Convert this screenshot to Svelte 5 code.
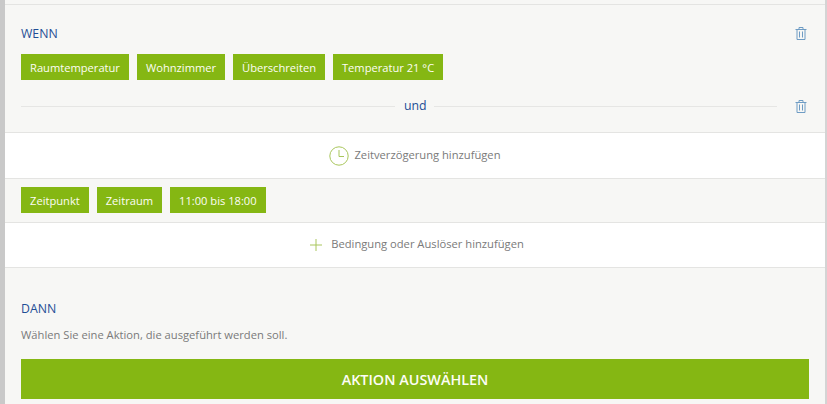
<script>
  const conditions = ["Raumtemperatur", "Wohnzimmer", "Überschreiten", "Temperatur 21 °C"];
  const times = ["Zeitpunkt", "Zeitraum", "11:00 bis 18:00"];
</script>

{#snippet trash()}
  <svg class="trash" width="12" height="13" viewBox="0 0 12 13" fill="none" stroke="#6f9cc4" stroke-width="1">
    <path d="M0.5 2.5h11M4 2.5V.5h4v2M2 2.5V12.5h8V2.5M4.5 4.5v6M7.5 4.5v6" />
  </svg>
{/snippet}

<div class="page">
  <section class="when">
    <div class="head">
      <h2>WENN</h2>
      {@render trash()}
    </div>
    <div class="chips">
      {#each conditions as c}
        <span class="chip">{c}</span>
      {/each}
    </div>
    <div class="sep">
      <span class="line first"></span>
      <span class="und">und</span>
      <span class="line"></span>
      {@render trash()}
    </div>
  </section>

  <div class="add delay">
    <svg width="20" height="20" viewBox="0 0 20 20" fill="none" stroke="#a9c65c" stroke-width="1">
      <circle cx="10" cy="10" r="9.2" />
      <path d="M10 4v6.5h5" />
    </svg>
    <span>Zeitverzögerung hinzufügen</span>
  </div>

  <div class="chips times">
    {#each times as t}
      <span class="chip">{t}</span>
    {/each}
  </div>

  <div class="add more">
    <svg width="12" height="12" viewBox="0 0 12 12" fill="none" stroke="#a9c65c" stroke-width="1">
      <path d="M6 0v12M0 6h12" />
    </svg>
    <span>Bedingung oder Auslöser hinzufügen</span>
  </div>

  <section class="then">
    <h2>DANN</h2>
    <p>Wählen Sie eine Aktion, die ausgeführt werden soll.</p>
    <button>AKTION AUSWÄHLEN</button>
  </section>
</div>

<style>
  :global(body) {
    margin: 0;
    background: #f6f6f4;
  }

  .page {
    box-sizing: border-box;
    width: 827px;
    height: 404px;
    overflow: hidden;
    padding-top: 4px;
    background: #f7f7f5;
    border-left: 5px solid #c9c9c9;
    border-right: 2px solid #d4d4d4;
    font-family: "Open Sans", sans-serif;
    font-size: 11.2px;
    color: #7a7a7a;
  }

  .when {
    box-sizing: border-box;
    height: 128px;
    padding: 20px 18px 0 16px;
    border-top: 1px solid #e4e4e2;
  }

  .head {
    display: flex;
    justify-content: space-between;
    align-items: center;
    height: 17px;
  }

  h2 {
    margin: 0;
    font-size: 12.3px;
    font-weight: 400;
    line-height: 17px;
    color: #1f4e96;
  }

  .chips {
    display: flex;
    gap: 8px;
  }

  .when .chips {
    margin-top: 12px;
  }

  .chip {
    display: flex;
    align-items: center;
    height: 26px;
    padding: 0 9px;
    background: #85b713;
    color: #fdfdf5;
    font-size: 11.15px;
  }

  .sep {
    display: flex;
    align-items: center;
    margin-top: 17px;
    height: 18px;
  }

  .line {
    flex: 1;
    height: 1px;
    background: #e6e6e4;
  }

  .line.first {
    flex: none;
    width: 374px;
  }

  .und {
    padding: 0 7px 2px 9px;
    font-size: 12.3px;
    color: #1f4e96;
  }

  .sep .trash {
    margin-left: 18px;
  }

  .add {
    box-sizing: border-box;
    display: flex;
    justify-content: center;
    align-items: center;
    background: #fff;
    border-top: 1px solid #e4e4e2;
    border-bottom: 1px solid #e4e4e2;
  }

  .add span {
    margin-bottom: 2px;
  }

  .delay {
    height: 47px;
    gap: 5px;
  }

  .more {
    height: 46px;
    gap: 9px;
    padding-left: 4px;
  }

  .more span {
    margin-bottom: 3px;
  }

  .times {
    padding: 8px 16px 9px;
  }

  .then {
    padding: 32px 16px 0;
  }

  p {
    margin: 10px 0 16px;
    font-size: 11.2px;
    line-height: 16px;
  }

  button {
    display: block;
    width: 788px;
    height: 40px;
    border: 0;
    background: #85b713;
    color: #fdfdf5;
    font-family: inherit;
    font-size: 14.4px;
    font-weight: 600;
  }
</style>
